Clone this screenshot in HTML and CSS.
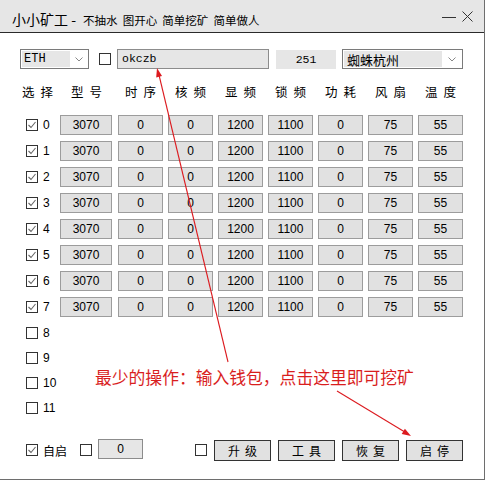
FILE: index.html
```html
<!DOCTYPE html>
<html lang="zh">
<head>
<meta charset="utf-8">
<title>小小矿工</title>
<link rel="stylesheet" href="styles.css">
</head>
<body>
<div class="window">
  <div class="titlebar">
    <div class="title"><span class="app">小小矿工 -</span><span class="slogan">不抽水&nbsp; 图开心&nbsp; 简单挖矿&nbsp; 简单做人</span></div>
    <div class="controls">
      <svg class="ic-min" width="14" height="10" viewBox="0 0 14 10"><line x1="0" y1="5.5" x2="14" y2="5.5" stroke="#333" stroke-width="1"/></svg>
      <svg class="ic-close" width="11" height="11" viewBox="0 0 11 11"><path d="M0.5 0.5 L10.5 10.5 M10.5 0.5 L0.5 10.5" stroke="#333" stroke-width="1" fill="none"/></svg>
    </div>
  </div>

  <div class="content">
    <div class="toprow">
      <div class="select sel-coin"><span class="sel-val mono">ETH</span><span class="chev"><svg width="8" height="5" viewBox="0 0 8 5"><polyline points="0.5,0.5 4,4 7.5,0.5" fill="none" stroke="#888" stroke-width="1"/></svg></span></div>
      <span class="cb cb-top"></span>
      <div class="wallet mono">okczb</div>
      <div class="num mono">251</div>
      <div class="select sel-pool"><span class="sel-val">蜘蛛杭州</span><span class="chev"><svg width="8" height="5" viewBox="0 0 8 5"><polyline points="0.5,0.5 4,4 7.5,0.5" fill="none" stroke="#888" stroke-width="1"/></svg></span></div>
    </div>

    <div class="cols header">
      <div class="h"><span>选</span><span>择</span></div>
      <div class="h"><span>型</span><span>号</span></div>
      <div class="h"><span>时</span><span>序</span></div>
      <div class="h"><span>核</span><span>频</span></div>
      <div class="h"><span>显</span><span>频</span></div>
      <div class="h"><span>锁</span><span>频</span></div>
      <div class="h"><span>功</span><span>耗</span></div>
      <div class="h"><span>风</span><span>扇</span></div>
      <div class="h"><span>温</span><span>度</span></div>
    </div>

    <div class="rows" id="rows"></div>

    <div class="bottom">
      <span class="cb checked"><svg width="10" height="10" viewBox="0 0 10 10"><polyline points="1.5,5 4,7.5 8.5,2" fill="none" stroke="#666" stroke-width="1.1"/></svg></span>
      <span class="auto">自启</span>
      <span class="cb cb-b2"></span>
      <div class="cell small">0</div>
      <span class="cb cb-b3"></span>
      <div class="btns">
        <div class="btn"><span>升</span><span>级</span></div>
        <div class="btn"><span>工</span><span>具</span></div>
        <div class="btn"><span>恢</span><span>复</span></div>
        <div class="btn"><span>启</span><span>停</span></div>
      </div>
    </div>
  </div>

  <svg class="annot" width="486" height="481" viewBox="0 0 486 481">
    <line x1="228" y1="362" x2="159" y2="75" stroke="#dc1a1f" stroke-width="1.1"/>
    <polygon points="157,68 162,76 156.2,77.5" fill="#dc1a1f"/>
    <line x1="337" y1="391" x2="404" y2="431.5" stroke="#dc1a1f" stroke-width="1.1"/>
    <polygon points="411,436 404.9,428.7 401.7,433.9" fill="#dc1a1f"/>
  </svg>
  <div class="note">最少的操作：输入钱包，点击这里即可挖矿</div>
</div>
<script src="app.js"></script>
</body>
</html>
```

FILE: app.js
```js
(function () {
  var rows = document.getElementById('rows');
  var check = '<svg width="10" height="10" viewBox="0 0 10 10"><polyline points="1.5,5 4,7.5 8.5,2" fill="none" stroke="#666" stroke-width="1.1"/></svg>';
  var vals = ['3070', '0', '0', '1200', '1100', '0', '75', '55'];
  for (var i = 0; i < 12; i++) {
    var r = document.createElement('div');
    var html = '<div class="sel"><span class="cb' + (i < 8 ? ' checked' : '') + '">' + (i < 8 ? check : '') + '</span><span class="idx">' + i + '</span></div>';
    if (i < 8) {
      r.className = 'cols row';
      for (var j = 0; j < vals.length; j++) {
        html += '<div class="cell' + (j === 0 ? ' model' : '') + '">' + vals[j] + '</div>';
      }
    } else {
      r.className = 'cols row empty';
    }
    r.innerHTML = html;
    rows.appendChild(r);
  }
})();
```

FILE: styles.css
```css
html, body {
  margin: 0;
  padding: 0;
  background: #fff;
}
body {
  font-family: "Noto Sans CJK SC", "Liberation Sans", sans-serif;
  color: #000;
}
.mono {
  font-family: "Liberation Mono", "Noto Sans CJK SC", monospace;
}
.window {
  position: relative;
  width: 484px;
  height: 479px;
  border-right: 1px solid #6e6e6e;
  border-bottom: 1px solid #6e6e6e;
  background: #fff;
}
.titlebar {
  height: 33px;
  box-sizing: border-box;
  border-bottom: 1px solid #2a2a2a;
  background: #e6e6e6;
  display: flex;
  align-items: center;
  padding-left: 12px;
  padding-right: 11px;
}
.title {
  margin-top: 5px;
  display: flex;
  align-items: baseline;
  white-space: nowrap;
}
.app {
  font-size: 14px;
  margin-right: 7px;
}
.slogan {
  font-size: 11.5px;
}
.controls {
  margin-left: auto;
  display: flex;
  align-items: center;
  gap: 6px;
  margin-top: 1px;
}

.content {
  padding: 16px 0 0 20px;
}
.toprow {
  display: flex;
  align-items: center;
  height: 20px;
}
.select {
  height: 20px;
  box-sizing: border-box;
  border: 1px solid #7a7a7a;
  padding: 1px 0 1px 1px;
  display: flex;
  background: #fff;
}
.sel-val {
  flex: 1;
  background: #e6e6e6;
  font-size: 12px;
  line-height: 16px;
  padding-left: 2px;
  white-space: nowrap;
}
.sel-val.mono { font-size: 12px; }
.chev {
  display: flex;
  align-items: center;
  justify-content: center;
}
.sel-coin { width: 69px; }
.sel-coin .chev { width: 18px; }
.sel-pool { width: 121px; margin-left: 6px; }
.sel-pool .chev { width: 20px; }
.sel-pool .sel-val { font-size: 13px; line-height: 17px; padding-left: 3px; }

.cb {
  display: inline-flex;
  align-items: center;
  justify-content: center;
  width: 12px;
  height: 12px;
  box-sizing: border-box;
  border: 1px solid #333;
  background: #fff;
  flex: none;
}
.cb-top { margin-left: 10px; }
.wallet {
  margin-left: 6px;
  width: 152px;
  height: 20px;
  box-sizing: border-box;
  background: #e6e6e6;
  border: 1px solid #8c8c8c;
  font-size: 11.5px;
  line-height: 17px;
  padding-left: 4px;
}
.num {
  margin-left: 7px;
  width: 60px;
  height: 19px;
  background: #e6e6e6;
  font-size: 11.5px;
  line-height: 19px;
  text-align: center;
}

.cols {
  display: grid;
  grid-template-columns: 35px 53px repeat(7, 45px);
  column-gap: 5px;
}
.header {
  margin-top: 15px;
  height: 16px;
  font-size: 12.5px;
  line-height: 16px;
}
.h {
  display: flex;
  justify-content: center;
  gap: 6px;
}
.rows {
  margin-top: 15px;
  display: flex;
  flex-direction: column;
  gap: 6px;
}
.row { height: 20px; }
.row.empty { height: 19px; }
.sel {
  display: flex;
  align-items: center;
  padding-left: 6px;
  gap: 5px;
}
.idx {
  font-family: "Liberation Sans", sans-serif;
  font-size: 12px;
}
.cell {
  width: 45px;
  height: 20px;
  box-sizing: border-box;
  background: #e1e1e1;
  border: 1px solid #9c9c9c;
  display: flex;
  align-items: center;
  justify-content: center;
  font-family: "Liberation Sans", sans-serif;
  font-size: 12px;
}
.cell.model { width: 52px; }

.bottom {
  margin-top: 22px;
  height: 22px;
  display: flex;
  align-items: center;
  padding-left: 6px;
}
.auto {
  margin-left: 5px;
  font-size: 12px;
}
.cb-b2 { margin-left: 13px; }
.cell.small {
  margin-left: 6px;
  margin-bottom: 2px;
  background: #e6e6e6;
  border-color: #8c8c8c;
}
.cb-b3 { margin-left: 52px; }
.btns {
  margin-left: 7px;
  display: flex;
  gap: 7px;
}
.btn {
  width: 57px;
  height: 21px;
  box-sizing: border-box;
  border: 1px solid #333;
  background: #e1e1e1;
  display: flex;
  align-items: center;
  justify-content: center;
  gap: 5px;
  font-size: 12px;
}

.annot {
  position: absolute;
  left: 0;
  top: 0;
  pointer-events: none;
}
.note {
  position: absolute;
  left: 95px;
  top: 366px;
  font-size: 16.8px;
  line-height: 22px;
  color: #d91e1e;
  white-space: nowrap;
}
```
